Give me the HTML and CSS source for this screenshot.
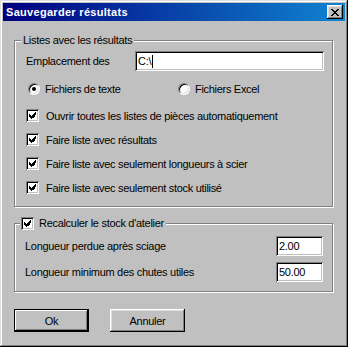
FILE: index.html
```html
<!DOCTYPE html>
<html lang="fr">
<head>
  <meta charset="UTF-8">
  <meta name="viewport" content="width=device-width, initial-scale=1.0">
  <title>Sauvegarder résultats</title>
  <link rel="stylesheet" href="styles.css">
</head>
<body>

  <div class="window">
    <!-- Title bar -->
    <div class="titlebar">
      <span class="title">Sauvegarder résultats</span>
      <span class="close">
        <svg width="8" height="7" viewBox="0 0 8 7" shape-rendering="crispEdges">
          <path d="M0 0h2v1H0zM6 0h2v1H6zM1 1h2v1H1zM5 1h2v1H5zM2 2h4v1H2zM3 3h2v1H3zM2 4h4v1H2zM1 5h2v1H1zM5 5h2v1H5zM0 6h2v1H0zM6 6h2v1H6z" fill="#000"/>
        </svg>
      </span>
    </div>

    <div class="content">
      <!-- Lists group -->
      <fieldset class="group group-lists">
        <legend class="legend-text">Listes avec les résultats</legend>

        <div class="path-row">
          <div class="path-label">
            <span class="path-line">Emplacement des</span>
            <span class="path-line path-line-cut">fichiers</span>
          </div>
          <div class="field field-path">C:\<span class="caret"></span></div>
        </div>

        <div class="radio-row">
          <div class="option option-text">
            <span class="radio checked"></span>
            <span>Fichiers de texte</span>
          </div>
          <div class="option">
            <span class="radio"></span>
            <span>Fichiers Excel</span>
          </div>
        </div>

        <div class="check-list">
          <div class="option">
            <span class="check checked"><svg width="7" height="7" viewBox="0 0 7 7" shape-rendering="crispEdges"><path d="M6 0h1v3H6zM5 1h1v4H5zM4 2h1v4H4zM0 2h1v3H0zM1 3h1v3H1zM2 4h1v3H2zM3 3h1v3H3z" fill="#000"/></svg></span>
            <span>Ouvrir toutes les listes de pièces automatiquement</span>
          </div>
          <div class="option">
            <span class="check checked"><svg width="7" height="7" viewBox="0 0 7 7" shape-rendering="crispEdges"><path d="M6 0h1v3H6zM5 1h1v4H5zM4 2h1v4H4zM0 2h1v3H0zM1 3h1v3H1zM2 4h1v3H2zM3 3h1v3H3z" fill="#000"/></svg></span>
            <span>Faire liste avec résultats</span>
          </div>
          <div class="option">
            <span class="check checked"><svg width="7" height="7" viewBox="0 0 7 7" shape-rendering="crispEdges"><path d="M6 0h1v3H6zM5 1h1v4H5zM4 2h1v4H4zM0 2h1v3H0zM1 3h1v3H1zM2 4h1v3H2zM3 3h1v3H3z" fill="#000"/></svg></span>
            <span>Faire liste avec seulement longueurs à scier</span>
          </div>
          <div class="option">
            <span class="check checked"><svg width="7" height="7" viewBox="0 0 7 7" shape-rendering="crispEdges"><path d="M6 0h1v3H6zM5 1h1v4H5zM4 2h1v4H4zM0 2h1v3H0zM1 3h1v3H1zM2 4h1v3H2zM3 3h1v3H3z" fill="#000"/></svg></span>
            <span>Faire liste avec seulement stock utilisé</span>
          </div>
        </div>
      </fieldset>

      <!-- Stock group -->
      <fieldset class="group group-stock">
        <legend class="legend-check">
          <span class="check checked"><svg width="7" height="7" viewBox="0 0 7 7" shape-rendering="crispEdges"><path d="M6 0h1v3H6zM5 1h1v4H5zM4 2h1v4H4zM0 2h1v3H0zM1 3h1v3H1zM2 4h1v3H2zM3 3h1v3H3z" fill="#000"/></svg></span>
          <span>Recalculer le stock d'atelier</span>
        </legend>

        <div class="value-row">
          <span>Longueur perdue après sciage</span>
          <div class="field field-num">2.00</div>
        </div>
        <div class="value-row">
          <span>Longueur minimum des chutes utiles</span>
          <div class="field field-num">50.00</div>
        </div>
      </fieldset>

      <!-- Buttons -->
      <div class="buttons">
        <button class="btn btn-default">Ok</button>
        <button class="btn">Annuler</button>
      </div>
    </div>
  </div>

</body>
</html>
```

FILE: styles.css
```css
/* General Styles */
* {
  box-sizing: border-box;
}

body {
  margin: 0;
  font-family: "Liberation Sans", Arial, sans-serif;
  font-size: 11px;
  letter-spacing: -0.3px;
  color: #000;
  background-color: #c0c0c0;
}

.window {
  width: 348px;
  height: 347px;
  padding: 3px;
  background-color: #c0c0c0;
  box-shadow: inset -1px -1px #000, inset 1px 1px #dfdfdf,
              inset -2px -2px #808080, inset 2px 2px #fff;
}

/* Title bar */
.titlebar {
  height: 18px;
  display: flex;
  align-items: center;
  justify-content: space-between;
  padding: 0 2px 0 3px;
  background: linear-gradient(to right, #000080, #1084d0);
}

.title {
  color: #fff;
  font-weight: bold;
  font-size: 11px;
  letter-spacing: 0.3px;
}

.close {
  width: 16px;
  height: 14px;
  display: flex;
  justify-content: center;
  align-items: center;
  background-color: #c0c0c0;
  box-shadow: inset -1px -1px #000, inset 1px 1px #fff,
              inset -2px -2px #808080, inset 2px 2px #dfdfdf;
}

/* Content */
.content {
  padding: 0 11px;
}

.group {
  margin: 0 1px 0 0;
  border: 1px solid #808080;
  box-shadow: 1px 1px 0 #fff, inset 1px 1px 0 #fff;
  min-width: 0;
}

.group legend {
  height: 13px;
  line-height: 13px;
  background-color: #c0c0c0;
}

.group-lists {
  margin-top: 13px;
  padding: 4px 7px 12px 11px;
}

.legend-text {
  margin-left: -5px;
  padding: 0 2px;
}

.group-stock {
  margin-top: 10px;
  padding: 6px 9px 9px 10px;
}

.legend-check {
  display: flex;
  align-items: center;
  gap: 5px;
  margin-left: -5px;
  padding: 0 2px 0 1px;
}

/* Path row */
.path-row {
  display: flex;
  height: 20px;
}

.path-label {
  width: 109px;
  height: 24px;
  flex-shrink: 0;
  margin-top: 4px;
  line-height: 13px;
  overflow: hidden;
}

.path-line {
  display: block;
}

.path-line-cut {
  margin-top: 9px;
}

.field {
  height: 20px;
  padding: 0 3px;
  line-height: 20px;
  background-color: #fff;
  box-shadow: inset 1px 1px #808080, inset -1px -1px #fff,
              inset 2px 2px #000, inset -2px -2px #c0c0c0;
}

.field-path {
  width: 189px;
  display: flex;
  align-items: center;
}

.caret {
  width: 1px;
  height: 13px;
  margin-left: 1px;
  background-color: #000;
}

/* Radios and checkboxes */
.radio-row {
  display: flex;
  height: 14px;
  margin-top: 11px;
  padding-left: 2px;
}

.option {
  display: flex;
  align-items: center;
  gap: 7px;
  height: 13px;
}

.radio-row .option {
  height: 14px;
  gap: 5px;
}

.option-text {
  width: 150px;
}

.radio {
  width: 12px;
  height: 12px;
  flex-shrink: 0;
  border-radius: 50%;
  background-color: #fff;
  border: 1px solid;
  border-color: #808080 #fff #fff #808080;
  box-shadow: inset 1px 1px #000, inset -1px -1px #dfdfdf;
  display: flex;
  justify-content: center;
  align-items: center;
}

.radio.checked::after {
  content: "";
  width: 4px;
  height: 4px;
  border-radius: 50%;
  background-color: #000;
}

.check-list {
  display: flex;
  flex-direction: column;
  gap: 11px;
  margin-top: 13px;
}

.check {
  width: 13px;
  height: 13px;
  flex-shrink: 0;
  display: flex;
  justify-content: center;
  align-items: center;
  background-color: #fff;
  box-shadow: inset 1px 1px #808080, inset -1px -1px #fff,
              inset 2px 2px #000, inset -2px -2px #c0c0c0;
}

/* Value rows */
.value-row {
  display: flex;
  justify-content: space-between;
  align-items: center;
  height: 20px;
}

.value-row + .value-row {
  margin-top: 6px;
}

.field-num {
  width: 47px;
}

/* Buttons */
.buttons {
  display: flex;
  gap: 21px;
  margin-top: 17px;
}

.btn {
  width: 75px;
  height: 23px;
  padding: 0;
  font-family: inherit;
  font-size: 11px;
  letter-spacing: inherit;
  color: #000;
  border: none;
  background-color: #c0c0c0;
  box-shadow: inset -1px -1px #000, inset 1px 1px #fff,
              inset -2px -2px #808080, inset 2px 2px #dfdfdf;
}

.btn-default {
  border: 1px solid #000;
  box-shadow: inset -1px -1px #000, inset 1px 1px #fff,
              inset -2px -2px #808080;
}
```
